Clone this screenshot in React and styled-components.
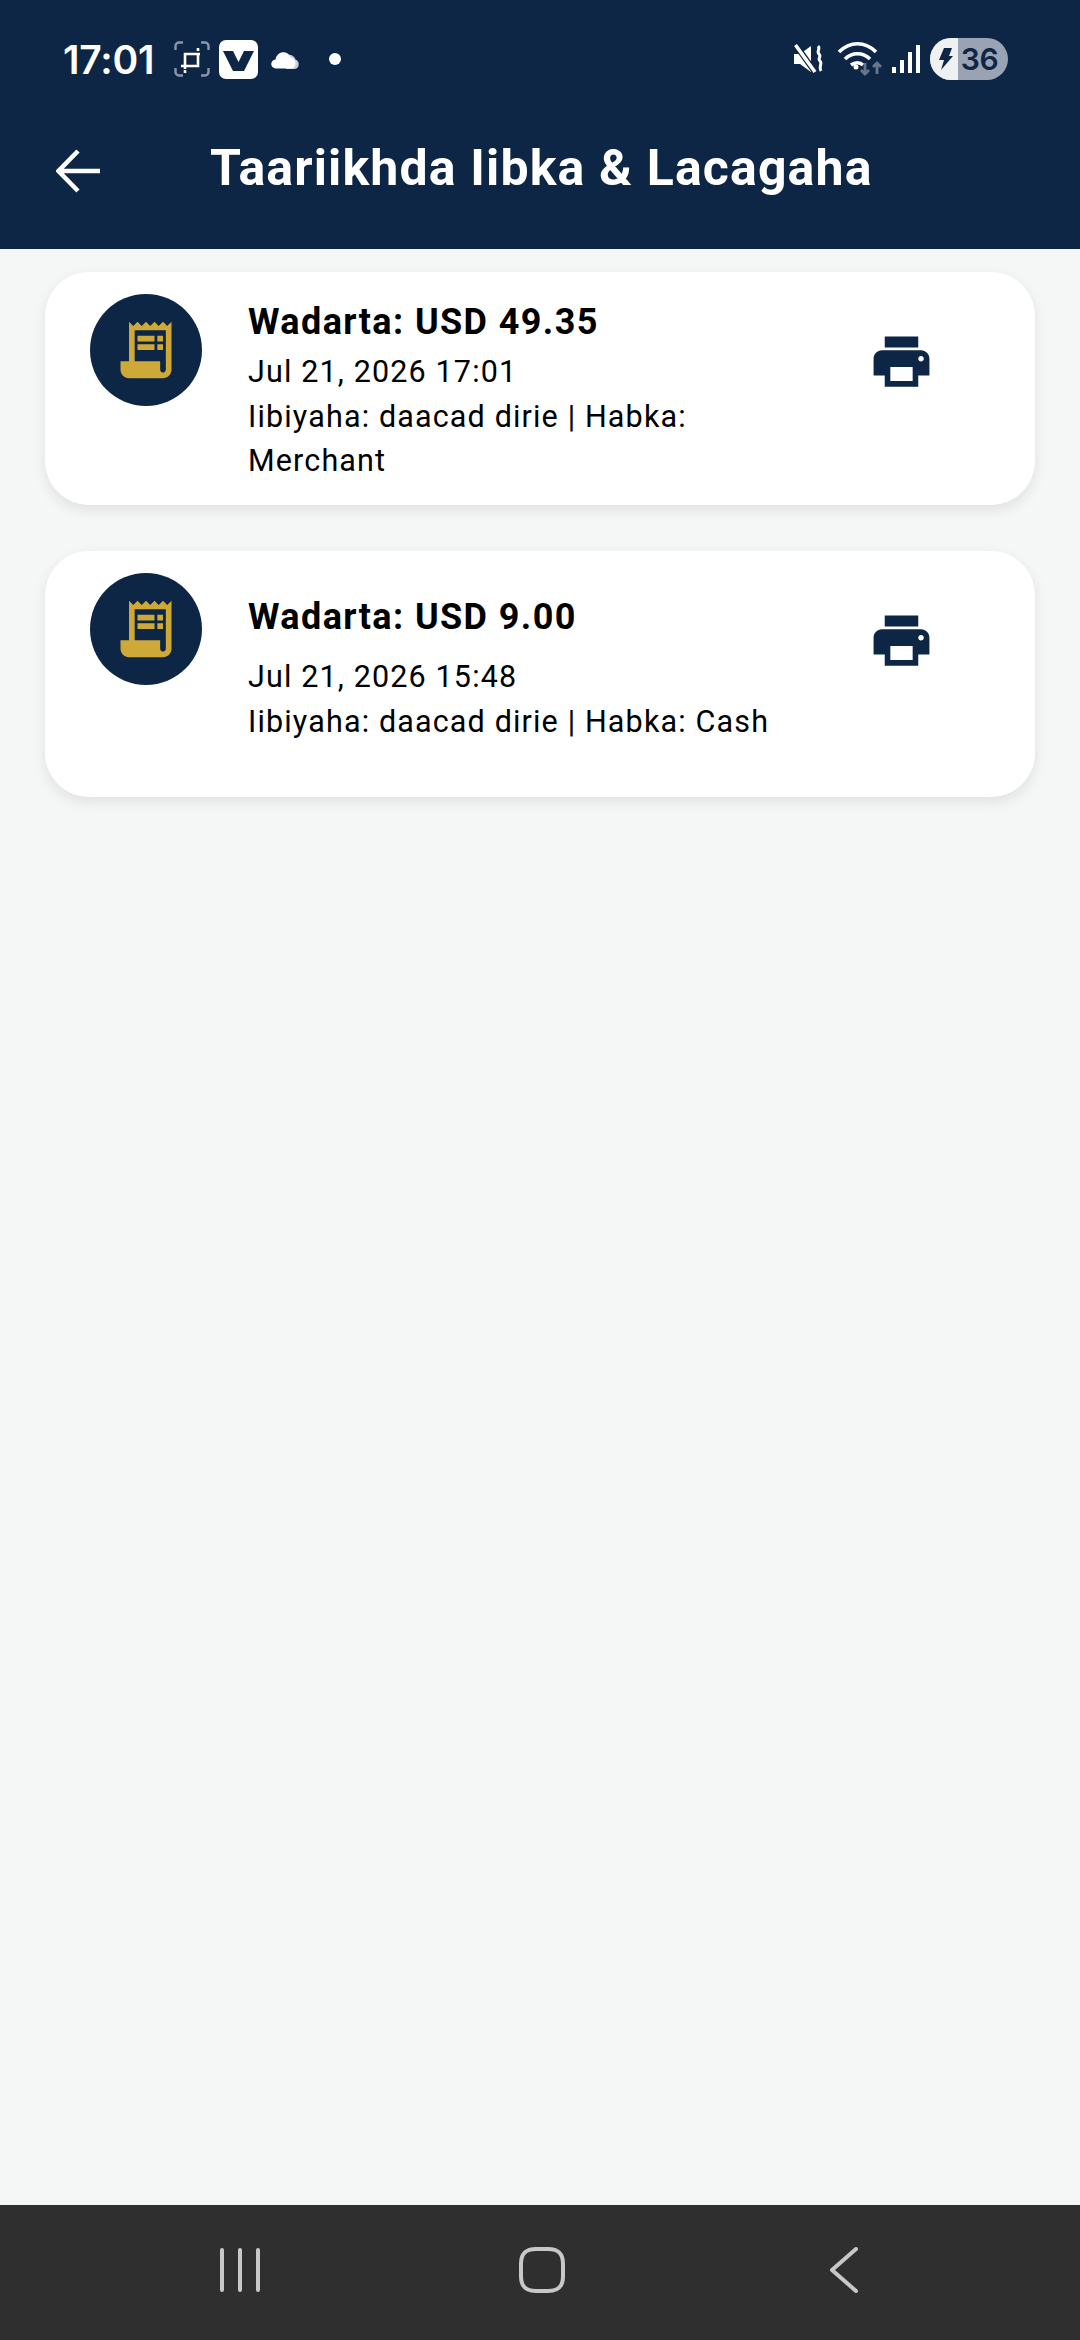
import React from 'react'
import styled, { createGlobalStyle } from 'styled-components'

const navy = '#0d2646'
const gold = '#cfa938'

const GlobalStyle = createGlobalStyle`
    html, body {
        margin: 0;
        padding: 0;
        background: #f5f7f6;
    }
    * {
        box-sizing: border-box;
    }
`

const Screen = styled.div`
    width: 1080px;
    height: 2340px;
    display: flex;
    flex-direction: column;
    background: #f5f7f6;
    font-family: Roboto, "Liberation Sans", sans-serif;
    overflow: hidden;
`

const Header = styled.header`
    height: 249px;
    flex: none;
    background: ${navy};
    color: #fff;
`

const StatusBar = styled.div`
    height: 118px;
    padding: 0 72px 0 63px;
    display: flex;
    align-items: center;
    justify-content: space-between;
`

const StatusGroup = styled.div`
    display: flex;
    align-items: center;
`

const Time = styled.span`
    width: 111px;
    font-family: Inter, Roboto, sans-serif;
    font-size: 39px;
    font-weight: 600;
    letter-spacing: -0.2px;
`

const StatusIcon = styled.svg`
    display: block;
    flex: none;
    margin-right: ${p => p.$gap || 0}px;
`

const Battery = styled.div`
    width: 78px;
    height: 42px;
    margin-left: 10px;
    border-radius: 21px;
    overflow: hidden;
    display: flex;
    background: #9aa3b3;
`

const BatteryFill = styled.div`
    width: 28px;
    padding-right: 5px;
    background: #eef0f2;
    display: flex;
    align-items: center;
    justify-content: flex-end;
`

const BatteryLevel = styled.span`
    flex: 1;
    padding-right: 7px;
    text-align: center;
    font-family: Inter, Roboto, sans-serif;
    font-size: 30px;
    line-height: 42px;
    font-weight: 600;
    color: ${navy};
    letter-spacing: -0.3px;
`

const AppBar = styled.div`
    height: 96px;
    padding: 4px 0 0 56px;
    display: flex;
    align-items: center;
`

const BackButton = styled.svg`
    display: block;
    flex: none;
    margin: 6px 110px 0 0;
`

const Title = styled.h1`
    margin: 0;
    font-size: 50px;
    font-weight: 700;
    letter-spacing: 1.15px;
`

const List = styled.main`
    flex: 1;
    padding: 23px 45px 0;
    display: flex;
    flex-direction: column;
    gap: 46px;
`

const Card = styled.article`
    height: ${p => p.$height}px;
    padding: 22px 45px 0;
    display: flex;
    align-items: flex-start;
    background: #fff;
    border-radius: 44px;
    box-shadow: 0 5px 14px rgba(0, 0, 0, 0.09);
`

const Avatar = styled.div`
    width: 112px;
    height: 112px;
    flex: none;
    border-radius: 50%;
    background: ${navy};
    display: flex;
    align-items: center;
    justify-content: center;
`

const Details = styled.div`
    width: 580px;
    flex: none;
    margin: ${p => p.$top}px 0 0 46px;
    padding-right: 40px;
    color: #000;
`

const Amount = styled.div`
    font-size: 36px;
    line-height: 50px;
    font-weight: 700;
    letter-spacing: 1.4px;
    margin-bottom: ${p => p.$gap}px;
`

const Line = styled.div`
    font-size: 30.5px;
    line-height: 44.5px;
    letter-spacing: 1.15px;
`

const PrintButton = styled.svg`
    display: block;
    flex: none;
    margin: 34px 0 0 40px;
`

const NavBar = styled.nav`
    height: 135px;
    flex: none;
    padding: 0 0 6px 89px;
    background: #2f2f2f;
    display: flex;
    align-items: center;
`

const NavSlot = styled.div`
    width: 302px;
    display: flex;
    justify-content: center;
`

const sales = [
    { amount: 'Wadarta: USD 49.35', date: 'Jul 21, 2026 17:01', seller: 'Iibiyaha: daacad dirie | Habka: Merchant', height: 233, top: 3, gap: 3 },
    { amount: 'Wadarta: USD 9.00', date: 'Jul 21, 2026 15:48', seller: 'Iibiyaha: daacad dirie | Habka: Cash', height: 246, top: 19, gap: 13 },
]

const ReceiptIcon = () => (
    <svg width="68" height="68" viewBox="0 0 24 24" fill={gold}>
        <path d="M19.5 3.5L18 2l-1.5 1.5L15 2l-1.5 1.5L12 2l-1.5 1.5L9 2 7.5 3.5 6 2v14H3v3c0 1.66 1.34 3 3 3h12c1.66 0 3-1.34 3-3V2l-1.5 1.5zM19 19c0 .55-.45 1-1 1s-1-.45-1-1v-3H8V5h11v14z" />
        <path d="M9 7h6v2H9zM16 7h2v2h-2zM9 10h6v2H9zM16 10h2v2h-2z" />
    </svg>
)

const PrintIcon = () => (
    <PrintButton width="67" height="67" viewBox="0 0 24 24" fill={navy}>
        <path d="M19 8H5c-1.66 0-3 1.34-3 3v6h4v4h12v-4h4v-6c0-1.66-1.34-3-3-3zm-3 11H8v-5h8v5zm3-7c-.55 0-1-.45-1-1s.45-1 1-1 1 .45 1 1-.45 1-1 1zm-1-9H6v4h12V3z" />
    </PrintButton>
)

function App() {
    return (
        <Screen>
            <GlobalStyle />
            <Header>
                <StatusBar>
                    <StatusGroup>
                        <Time>17:01</Time>
                        <StatusIcon $gap={9} width="36" height="36" viewBox="0 0 36 36" fill="none">
                            <path d="M1.5 9V5a3.5 3.500 0 0 1 3.500-3.500h4M27 1.500h4A3.500 3.500 0 0 1 34.500 5v4M34.500 27v4a3.500 3.500 0 0 1-3.500 3.500h-4M9 34.500H5A3.500 3.500 0 0 1 1.500 31v-4" stroke="#8b97a8" strokeWidth="2.400" />
                            <path d="M7 25h17V12M11 28V13h15" stroke="#fff" strokeWidth="2.600" />
                            <path d="M24 7v3M11 29v3" stroke="#fff" strokeWidth="2.600" />
                        </StatusIcon>
                        <StatusIcon $gap={13} width="39" height="39" viewBox="0 0 39 39">
                            <rect width="39" height="39" rx="7" fill="#fff" />
                            <path d="M4 11h10l5.500 11L25 11h10l-10 20H14z" fill={navy} />
                        </StatusIcon>
                        <StatusIcon $gap={28} width="30" height="20" viewBox="0 0 30 20">
                            <path d="M17 6a6.500 6.500 0 0 1 7.500 4.500A5 5 0 0 1 24 20h-9z" fill="#c9ced6" />
                            <path d="M5 19.500a4.500 4.500 0 0 1-.5-9 8 8 0 0 1 15.500-2 6 6 0 0 1 1.500 11z" fill="#fff" />
                        </StatusIcon>
                        <StatusIcon width="12" height="12" viewBox="0 0 12 12">
                            <circle cx="6" cy="6" r="6" fill="#fff" />
                        </StatusIcon>
                    </StatusGroup>
                    <StatusGroup>
                        <StatusIcon $gap={13} width="30" height="30" viewBox="0 0 30 30" fill="none">
                            <path d="M0 10h6l11-8v26L6 20H0z" fill="#fff" />
                            <path d="M1 0L21 28" stroke={navy} strokeWidth="6" />
                            <path d="M1.500 1L21 28" stroke="#fff" strokeWidth="3.500" />
                            <path d="M24 2c3 3-2 5 1 8s-2 4 1 7-2 5 1 10" stroke="#fff" strokeWidth="3" />
                        </StatusIcon>
                        <StatusIcon $gap={9} width="46" height="36" viewBox="0 0 46 36" fill="none">
                            <path d="M2 11c11-11 26-11 37 0" stroke="#fff" strokeWidth="3.600" />
                            <path d="M8 18c7-7 18-7 25 0" stroke="#fff" strokeWidth="3.600" />
                            <path d="M14 24c4-3 9-3 12 0" stroke="#fff" strokeWidth="3.600" />
                            <circle cx="19" cy="26" r="2.500" fill="#fff" />
                            <path d="M28 22v11M24 29l4 4 4-4" stroke="#68758a" strokeWidth="2.800" />
                            <path d="M40 33V22M36 26l4-4 4 4" stroke="#68758a" strokeWidth="2.800" />
                        </StatusIcon>
                        <StatusIcon width="28" height="30" viewBox="0 0 28 30" fill="#fff">
                            <rect x="0" y="23" width="4" height="6" />
                            <rect x="8" y="16" width="4" height="13" />
                            <rect x="16" y="8" width="4" height="21" />
                            <rect x="24" y="1" width="4" height="28" />
                        </StatusIcon>
                        <Battery>
                            <BatteryFill>
                                <StatusIcon width="15" height="22" viewBox="0 0 15 22">
                                    <path d="M6 0h8l-3 8h4L3 22l3-10H1z" fill={navy} />
                                </StatusIcon>
                            </BatteryFill>
                            <BatteryLevel>36</BatteryLevel>
                        </Battery>
                    </StatusGroup>
                </StatusBar>
                <AppBar>
                    <BackButton width="44" height="44" viewBox="0 0 44 44" fill="none">
                        <path d="M44 22H3M22 2L2.500 22 22 42" stroke="#fff" strokeWidth="4.500" />
                    </BackButton>
                    <Title>Taariikhda Iibka &amp; Lacagaha</Title>
                </AppBar>
            </Header>
            <List>
                {sales.map((sale, i) => (
                    <Card key={i} $height={sale.height}>
                        <Avatar><ReceiptIcon /></Avatar>
                        <Details $top={sale.top}>
                            <Amount $gap={sale.gap}>{sale.amount}</Amount>
                            <Line>{sale.date}</Line>
                            <Line>{sale.seller}</Line>
                        </Details>
                        <PrintIcon />
                    </Card>
                ))}
            </List>
            <NavBar>
                <NavSlot>
                    <svg width="40" height="44" viewBox="0 0 40 44" fill="none" stroke="#c8c8c8" strokeWidth="4" strokeLinecap="round">
                        <path d="M2 2v40M20 2v40M38 2v40" />
                    </svg>
                </NavSlot>
                <NavSlot>
                    <svg width="46" height="46" viewBox="0 0 46 46" fill="none" stroke="#c8c8c8" strokeWidth="4">
                        <path d="M17 2h12c11 0 15 5 15 15v12c0 10-4 15-15 15H17C6 44 2 39 2 29V17C2 7 6 2 17 2z" />
                    </svg>
                </NavSlot>
                <NavSlot>
                    <svg width="28" height="46" viewBox="0 0 28 46" fill="none" stroke="#c8c8c8" strokeWidth="4" strokeLinecap="round" strokeLinejoin="round">
                        <path d="M26 2L2 23l24 21" />
                    </svg>
                </NavSlot>
            </NavBar>
        </Screen>
    )
}

export default App
